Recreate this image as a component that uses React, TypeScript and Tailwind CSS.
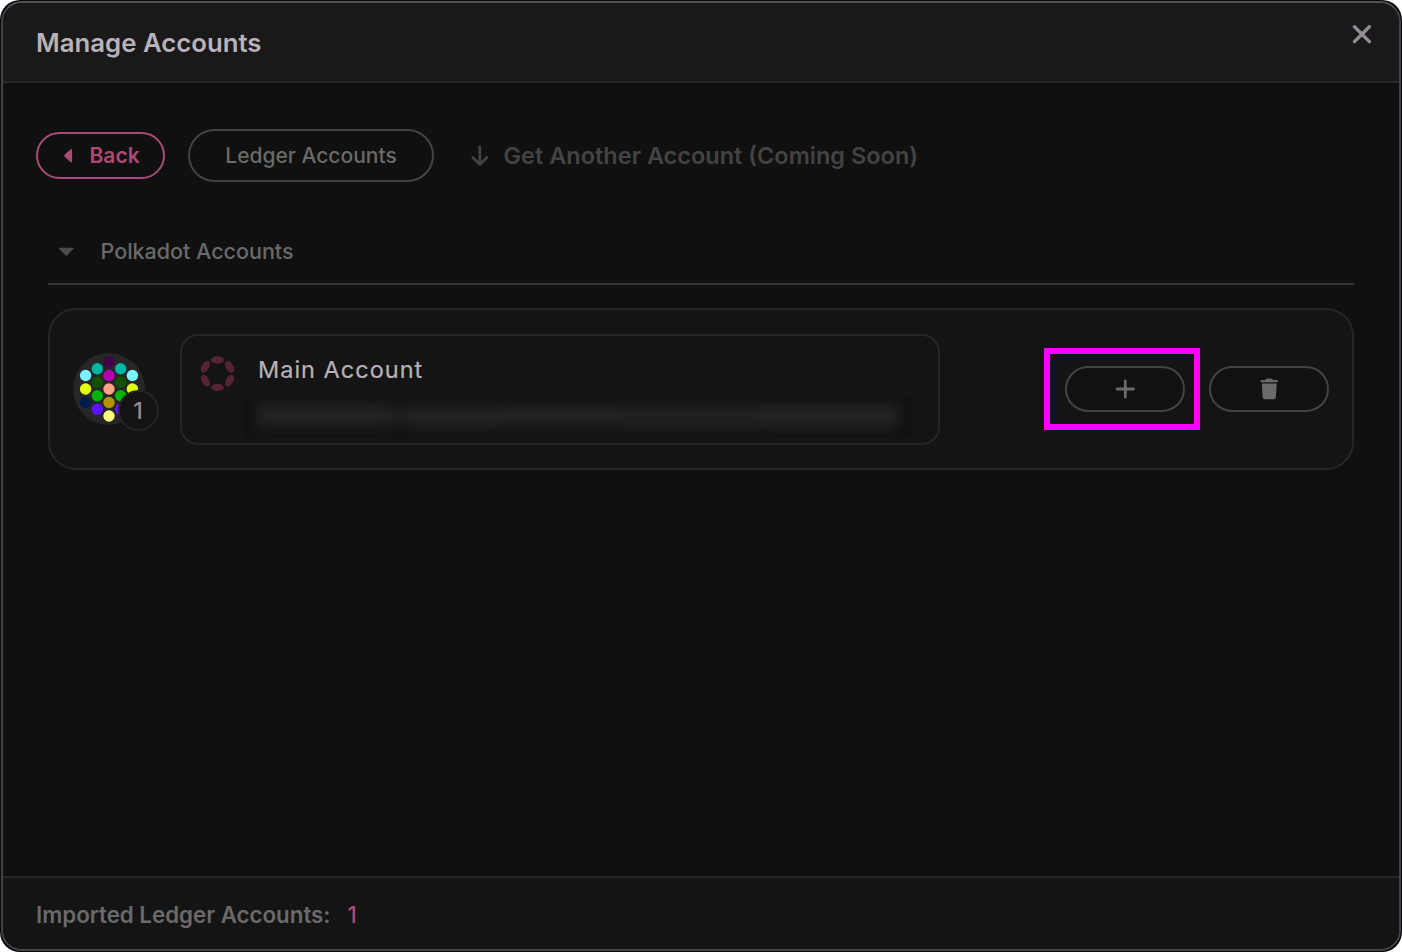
import type { ReactNode } from "react";

const DOTS: [number, number, string][] = [
  [36, 9, "#42004b"],
  [24.3, 15.8, "#00b5a3"],
  [47.7, 15.8, "#00b5a3"],
  [12.6, 22.5, "#7bf4ff"],
  [59.4, 22.5, "#7bf4ff"],
  [36, 22.5, "#b500ae"],
  [24.3, 29.3, "#135100"],
  [47.7, 29.3, "#135100"],
  [12.6, 36, "#e3ff12"],
  [59.4, 36, "#e3ff12"],
  [36, 36, "#ffa384"],
  [24.3, 42.8, "#00b505"],
  [47.7, 42.8, "#00b505"],
  [12.6, 49.5, "#001b4e"],
  [59.4, 49.5, "#001b4e"],
  [36, 49.5, "#b59300"],
  [24.3, 56.3, "#5e12ff"],
  [47.7, 56.3, "#5e12ff"],
  [36, 63, "#fffc84"],
];

function Identicon() {
  return (
    <svg className="size-[72px]" viewBox="0 0 72 72">
      <circle cx="36" cy="36" r="36" fill="#262626" />
      {DOTS.map(([x, y, fill], i) => (
        <circle key={i} cx={x} cy={y} r="5.7" fill={fill} />
      ))}
    </svg>
  );
}

function PolkadotIcon() {
  return (
    <svg className="size-9 shrink-0" viewBox="0 0 36 36" fill="#562333">
      <ellipse cx="18.5" cy="3.9" rx="6.5" ry="3.7" />
      <ellipse cx="18.5" cy="31.5" rx="6.5" ry="3.7" />
      <ellipse cx="6.4" cy="10.8" rx="6.5" ry="3.7" transform="rotate(-60 6.4 10.8)" />
      <ellipse cx="30.6" cy="24.6" rx="6.5" ry="3.7" transform="rotate(-60 30.6 24.6)" />
      <ellipse cx="30.6" cy="10.8" rx="6.5" ry="3.7" transform="rotate(60 30.6 10.8)" />
      <ellipse cx="6.4" cy="24.6" rx="6.5" ry="3.7" transform="rotate(60 6.4 24.6)" />
    </svg>
  );
}

function PillButton({ label, children }: { label: string; children: ReactNode }) {
  return (
    <button
      aria-label={label}
      className="flex h-[46px] w-[120px] items-center justify-center rounded-full border-2 border-[#434343] bg-[#111111] text-[#6a6a6a]"
    >
      {children}
    </button>
  );
}

export default function App() {
  return (
    <div className="h-[952px] w-[1402px] overflow-hidden bg-white font-['Inter',sans-serif]">
      <div className="h-full w-full rounded-[20px] bg-[#0b0712] p-px">
        <div className="flex h-full flex-col overflow-hidden rounded-[21px] border-2 border-[#434343] border-t-[#515151] bg-[#101010]">
          <header className="flex h-20 shrink-0 items-start justify-between border-b-2 border-[#262626] bg-[#191919] pr-[27px] pl-[33px]">
            <h1 className="pt-5 text-[25.75px] leading-10 font-semibold text-[#b8b2ba]">Manage Accounts</h1>
            <button aria-label="Close" className="mt-[21px]">
              <svg className="size-5" viewBox="0 0 20 20" fill="none" stroke="#918c93" strokeWidth="3.4" strokeLinecap="round">
                <path d="M2.5 2.7 17.4 17.6M17.4 2.7 2.5 17.6" />
              </svg>
            </button>
          </header>

          <main className="flex-1">
            <div className="flex items-center pt-[46px] pl-[33px]">
              <button className="flex h-[47px] w-[129px] items-center rounded-full border-2 border-[#ab4a75] pl-[25px] text-[#ab4a75]">
                <svg className="h-[14px] w-[10px]" viewBox="0 0 10 14" fill="currentColor">
                  <path d="M9.1 1v11.6q0 .9-.8.9-.5 0-.9-.4L1.6 7.8Q.8 6.8 1.6 5.8L7.4.5Q7.8.1 8.3.1q.8 0 .8.9Z" />
                </svg>
                <span className="ml-[16.5px] text-[21px] font-semibold">Back</span>
              </button>
              <button className="ml-[23px] flex h-[53px] w-[246px] items-center justify-center rounded-full border-2 border-[#434343] text-[21px] font-medium text-[#6a6a6a]">
                Ledger Accounts
              </button>
              <div className="ml-[36px] flex items-center text-[#434343]">
                <svg className="h-[22px] w-5" viewBox="0 0 20 22" fill="none" stroke="currentColor" strokeWidth="2.8" strokeLinecap="round" strokeLinejoin="round">
                  <path d="M9.8 2v17.3M2.8 12.5l7 7 7-7" />
                </svg>
                <span className="ml-[13.5px] pt-px text-[23.5px] font-semibold whitespace-nowrap">Get Another Account (Coming Soon)</span>
              </div>
            </div>

            <section className="mt-[38px] mr-[45px] ml-[45px]">
              <div className="flex h-[65px] items-center border-b-2 border-[#343434] pl-[10px] text-[#6a6a6a]">
                <svg className="h-[9px] w-4" viewBox="0 0 16 9" fill="#4c4c4c">
                  <path d="M1.8.7h13q1.2.2.5 1.2L9.3 8.2Q8.3 9 7.3 8.2L1.3 1.9Q.6.9 1.8.7Z" />
                </svg>
                <h2 className="ml-[26.5px] text-[21.5px] font-medium">Polkadot Accounts</h2>
              </div>

              <div className="mt-[23px] flex h-[162px] items-center rounded-[28px] border-2 border-[#262626] bg-[#141414] pl-[23px]">
                <div className="relative">
                  <Identicon />
                  <span className="absolute top-[37px] left-[45px] flex size-[41px] items-center justify-center rounded-full border-2 border-[#242424] bg-[#131313] pt-px pr-px text-[23px] font-medium text-[#918c93]">
                    1
                  </span>
                </div>
                <div className="ml-[35px] flex h-[111px] w-[760px] items-start rounded-[18px] border-2 border-[#262626] pt-[20px] pl-[17px]">
                  <PolkadotIcon />
                  <div className="ml-[8px] w-[669px]">
                    <p className="-mt-[4px] pl-[15px] text-[23.5px] leading-[36px] font-normal tracking-[1px] text-[#b8b2ba] [-webkit-text-stroke:0.2px_#b8b2ba]">
                      Main Account
                    </p>
                    <div className="mt-[10px] h-[40px] w-full overflow-hidden bg-[#121212]">
                      <div className="flex h-[35px] items-center px-[14px] blur-[6px]">
                        <div className="h-[23px] w-[130px] bg-[#222222]" />
                        <div className="h-[19px] w-[26px] bg-[#1f1f1f]" />
                        <div className="mt-1 h-[22px] w-[90px] bg-[#222222]" />
                        <div className="h-[21px] w-[120px] bg-[#222222]" />
                        <div className="mt-1 h-[24px] w-[135px] bg-[#202020]" />
                        <div className="h-[23px] flex-1 bg-[#232323]" />
                      </div>
                    </div>
                  </div>
                </div>
                <div className="ml-[104px] flex h-[82px] w-[156px] items-center border-[6px] border-[#ff00ff] pl-[15px]">
                  <PillButton label="Add account">
                    <svg className="size-5" viewBox="0 0 20 20" fill="none" stroke="currentColor" strokeWidth="2.8" strokeLinecap="round">
                      <path d="M10.3 1.8v16.4M2.1 10h16.4" />
                    </svg>
                  </PillButton>
                </div>
                <div className="ml-[9px]">
                  <PillButton label="Remove account">
                    <svg className="h-[22px] w-5" viewBox="0 0 20 22" fill="currentColor">
                      <path d="M2.1 2H6.500Q7 .5 8 .5h4.500Q13.500.5 14 2h4.400q.6 0 .6.7v1q0 .5-.6.5H2.1Q1.500 4.2 1.500 3.7v-1Q1.500 2 2.1 2Z" />
                      <path d="M2.8 5.4h14.900l-.8 13.7q-.2 2.200-2.200 2.200H5.800q-2 0-2.200-2.200Z" />
                    </svg>
                  </PillButton>
                </div>
              </div>
            </section>
          </main>

          <footer className="flex h-[73px] shrink-0 items-center border-t-2 border-[#262626] bg-[#141414] pt-[3px] pl-[33px] text-[22.3px]">
            <span className="font-semibold text-[#6a6a6a]">Imported Ledger Accounts:</span>
            <span className="ml-[17px] font-medium text-[#ab4a75]">1</span>
          </footer>
        </div>
      </div>
    </div>
  );
}
